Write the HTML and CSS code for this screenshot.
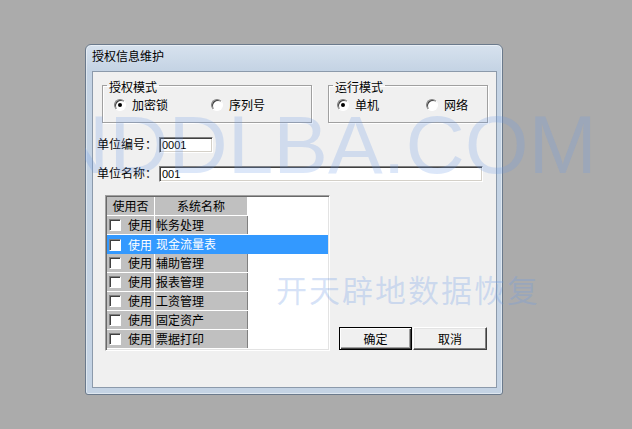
FILE: index.html
```html
<!DOCTYPE html>
<html lang="zh-CN">
<head>
    <meta charset="UTF-8">
    <title>授权信息维护</title>
    <link rel="stylesheet" href="styles.css">
</head>
<body>
    <div class="window">
        <div class="title">授权信息维护</div>
        <div class="client">
            <div class="modes">
                <fieldset class="group group-auth">
                    <legend>授权模式</legend>
                    <div class="options">
                        <label class="radio-item"><span class="radio checked"></span>加密锁</label>
                        <label class="radio-item"><span class="radio"></span>序列号</label>
                    </div>
                </fieldset>
                <fieldset class="group group-run">
                    <legend>运行模式</legend>
                    <div class="options">
                        <label class="radio-item"><span class="radio checked"></span>单机</label>
                        <label class="radio-item"><span class="radio"></span>网络</label>
                    </div>
                </fieldset>
            </div>

            <div class="field field-code">
                <span class="field-label">单位编号：</span>
                <div class="textbox code-box">0001</div>
            </div>
            <div class="field field-name">
                <span class="field-label">单位名称：</span>
                <div class="textbox name-box">001</div>
            </div>

            <div class="bottom">
                <div class="grid">
                    <div class="grid-head">
                        <div class="c1">使用否</div>
                        <div class="c2">系统名称</div>
                    </div>
                    <div class="row"><div class="c1"><span class="check"></span>使用</div><div class="c2">帐务处理</div></div>
                    <div class="row sel"><div class="c1"><span class="check"></span>使用</div><div class="c2">现金流量表</div></div>
                    <div class="row"><div class="c1"><span class="check"></span>使用</div><div class="c2">辅助管理</div></div>
                    <div class="row"><div class="c1"><span class="check"></span>使用</div><div class="c2">报表管理</div></div>
                    <div class="row"><div class="c1"><span class="check"></span>使用</div><div class="c2">工资管理</div></div>
                    <div class="row"><div class="c1"><span class="check"></span>使用</div><div class="c2">固定资产</div></div>
                    <div class="row"><div class="c1"><span class="check"></span>使用</div><div class="c2">票据打印</div></div>
                </div>
                <div class="buttons">
                    <div class="btn btn-default">确定</div>
                    <div class="btn btn-cancel">取消</div>
                </div>
            </div>
        </div>
    </div>

    <!-- watermarks over the screenshot -->
    <div class="wm wm-site"><span>NDDLBA.COM</span></div>
    <div class="wm wm-name">开天辟地数据恢复</div>
</body>
</html>
```

FILE: styles.css
```css
body {
    margin: 0;
    padding: 44px 0 0 85px;
    box-sizing: border-box;
    height: 429px;
    overflow: hidden;
    position: relative;
    background-color: #ababab;
    font-family: "Noto Sans CJK SC", sans-serif;
    font-size: 12px;
    color: #000;
}
.window {
    width: 418px;
    height: 351px;
    box-sizing: border-box;
    display: flex;
    flex-direction: column;
    padding: 0 5px 6px 6px;
    border: 1px solid #6b7a8c;
    border-radius: 6px 6px 3px 3px;
    background: linear-gradient(#d7e2ee, #c4d3e4 26px, #c4d3e4);
    box-shadow: inset 0 0 0 1px rgba(255,255,255,0.45);
}
.title {
    height: 26px;
    line-height: 22px;
}
.client {
    flex: 1;
    background-color: #f0f0f0;
    border: 1px solid #8c9aab;
    padding-top: 4px;
}

/* group boxes */
.modes {
    display: flex;
    gap: 16px;
    padding-left: 9px;
}
.group {
    margin: 0;
    padding: 4px 0 10px;
    min-width: 0;
    box-sizing: border-box;
    border: 1px solid #a0a0a0;
    box-shadow: 1px 1px 0 #fff, inset 1px 1px 0 #fff;
}
.group legend {
    margin-left: 4px;
    padding: 5px 2px 1px;
    line-height: 12px;
}
.group-auth {
    width: 210px;
}
.group-run {
    width: 160px;
}
.options {
    display: flex;
    align-items: center;
    line-height: 14px;
}
.group-auth .options {
    padding-left: 11px;
}
.group-run .options {
    padding-left: 8px;
}
.radio-item {
    display: flex;
    align-items: center;
}
.group-auth .radio-item:first-child {
    width: 97px;
}
.group-run .radio-item:first-child {
    width: 89px;
}
.radio {
    position: relative;
    width: 12px;
    height: 12px;
    box-sizing: border-box;
    margin-right: 6px;
    border-radius: 50%;
    background-color: #fff;
    border: 1px solid;
    border-color: #808080 #fff #fff #808080;
    box-shadow: inset 1px 1px 0 #404040;
}
.radio.checked::after {
    content: "";
    position: absolute;
    left: 3px;
    top: 3px;
    width: 4px;
    height: 4px;
    border-radius: 50%;
    background-color: #000;
}

/* text fields */
.field {
    display: flex;
    align-items: flex-start;
    height: 16px;
    padding-left: 4px;
}
.field-code {
    margin-top: 14px;
}
.field-name {
    margin-top: 13px;
}
.field-label {
    width: 62px;
    line-height: 14px;
}
.textbox {
    height: 16px;
    box-sizing: border-box;
    padding-left: 2px;
    background-color: #fff;
    border: 1px solid;
    border-color: #808080 #fff #fff #808080;
    box-shadow: inset 1px 1px 0 #404040, inset -1px -1px 0 #d4d0c8;
    font-family: "Liberation Sans", sans-serif;
    font-size: 11px;
    line-height: 14px;
}
.code-box {
    width: 54px;
}
.name-box {
    width: 324px;
}

/* system list */
.bottom {
    display: flex;
    align-items: flex-end;
    margin-top: 13px;
    padding-left: 12px;
}
.grid {
    width: 225px;
    height: 156px;
    box-sizing: border-box;
    padding: 1px;
    background-color: #fff;
    border: 1px solid;
    border-color: #a0a0a0 #fff #fff #a0a0a0;
    box-shadow: inset 1px 1px 0 #696969, inset -1px -1px 0 #e3e3e3;
}
.grid-head {
    display: flex;
    height: 18px;
    margin-bottom: 1px;
    line-height: 18px;
    text-align: center;
}
.grid-head .c1,
.grid-head .c2 {
    background-color: #c0c0c0;
}
.c1 {
    width: 47px;
    margin-right: 1px;
}
.c2 {
    width: 92px;
}
.row {
    display: flex;
    height: 19px;
}
.row .c1,
.row .c2 {
    height: 18px;
    line-height: 18px;
    background-color: #c0c0c0;
}
.row .c1 {
    display: flex;
    align-items: center;
}
.row .c2 {
    width: 93px;
    box-sizing: border-box;
    padding-left: 1px;
    border-right: 1px solid #808080;
}
.check {
    width: 12px;
    height: 12px;
    box-sizing: border-box;
    margin: 0 7px 0 2px;
    background-color: #fff;
    border: 1px solid;
    border-color: #808080 #fff #fff #808080;
    box-shadow: inset 1px 1px 0 #404040;
}
.row.sel {
    background-color: #3399ff;
    color: #fff;
}
.row.sel .c1,
.row.sel .c2 {
    height: 19px;
    background-color: transparent;
    border-right-color: transparent;
}

/* buttons */
.buttons {
    display: flex;
    gap: 1px;
    margin: 0 0 1px 9px;
}
.btn {
    height: 23px;
    box-sizing: border-box;
    text-align: center;
    line-height: 21px;
    background-color: #f0f0f0;
    border: 1px solid;
}
.btn-default {
    width: 73px;
    border-color: #000;
    box-shadow: inset 1px 1px 0 #fff, inset -1px -1px 0 #404040, inset -2px -2px 0 #a0a0a0;
}
.btn-cancel {
    width: 74px;
    border-color: #fff #404040 #404040 #fff;
    box-shadow: inset -1px -1px 0 #808080, inset 1px 1px 0 #e3e3e3;
}

/* watermarks */
.wm {
    position: absolute;
    white-space: nowrap;
    pointer-events: none;
}
.wm-site {
    left: 85px;
    top: 104px;
    width: 520px;
    overflow: hidden;
    font-family: "Liberation Sans", sans-serif;
    font-size: 82px;
    line-height: 82px;
    color: rgba(110,155,230,0.24);
}
.wm-site span {
    display: block;
    margin-left: -35px;
}
.wm-name {
    left: 276px;
    top: 272px;
    font-size: 31px;
    line-height: 33px;
    letter-spacing: 2px;
    color: rgba(110,155,230,0.28);
}
```
